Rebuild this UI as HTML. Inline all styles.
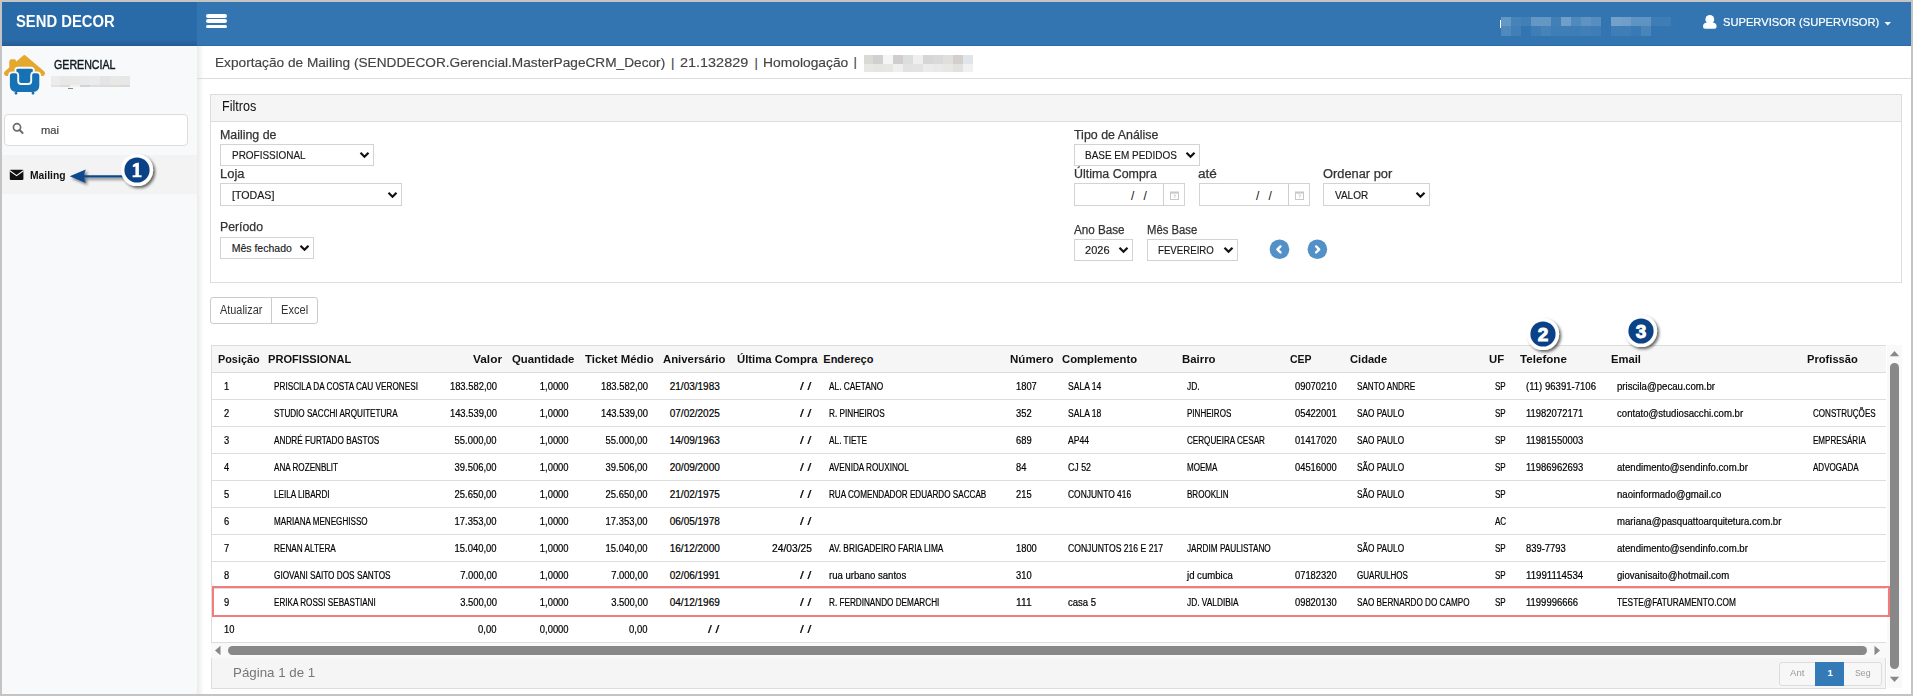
<!DOCTYPE html>
<html><head><meta charset="utf-8">
<style>
html,body{margin:0;padding:0;}
body{width:1913px;height:696px;position:relative;overflow:hidden;background:#c4c4c4;font-family:"Liberation Sans",sans-serif;}
.a{position:absolute;}
.t{position:absolute;white-space:nowrap;line-height:1;font-family:"Liberation Sans",sans-serif;}
.sel{position:absolute;background:#fff;border:1px solid #d3d3d3;box-sizing:border-box;}
.chev{position:absolute;width:11px;height:8px;}
.blk{position:absolute;}
</style></head><body>
<!-- page -->
<div class="a" style="left:2px;top:2px;width:1909px;height:692px;background:#fff;"></div>
<!-- header brand -->
<div class="a" style="left:2px;top:2px;width:195px;height:44px;background:linear-gradient(to bottom,#296aa8 0px,#296aa8 38px,#265f98 43px,#1e5590 44px);"></div>
<div class="a" style="left:197px;top:2px;width:1714px;height:44px;background:#3275b1;border-bottom:1px solid #2a6cab;box-sizing:border-box;"></div>
<!-- hamburger -->
<div class="a" style="left:206px;top:14px;width:21px;height:3.5px;border-radius:2px;background:#fff;"></div>
<div class="a" style="left:206px;top:19.3px;width:21px;height:3.5px;border-radius:2px;background:#fff;"></div>
<div class="a" style="left:206px;top:24.6px;width:21px;height:3.5px;border-radius:2px;background:#fff;"></div>
<!-- blurred header blocks -->
<div class="blk" style="left:1501px;top:17px;width:10px;height:9px;background:rgba(255,255,255,0.25);"></div>
<div class="blk" style="left:1501px;top:26px;width:10px;height:10px;background:rgba(255,255,255,0.15);"></div>
<div class="blk" style="left:1511px;top:17px;width:10px;height:9px;background:rgba(255,255,255,0.1);"></div>
<div class="blk" style="left:1511px;top:26px;width:10px;height:10px;background:rgba(255,255,255,0.08);"></div>
<div class="blk" style="left:1521px;top:17px;width:10px;height:9px;background:rgba(255,255,255,0.08);"></div>
<div class="blk" style="left:1531px;top:17px;width:10px;height:9px;background:rgba(255,255,255,0.25);"></div>
<div class="blk" style="left:1531px;top:26px;width:10px;height:10px;background:rgba(255,255,255,0.06);"></div>
<div class="blk" style="left:1541px;top:17px;width:10px;height:9px;background:rgba(255,255,255,0.25);"></div>
<div class="blk" style="left:1541px;top:26px;width:10px;height:10px;background:rgba(255,255,255,0.1);"></div>
<div class="blk" style="left:1551px;top:17px;width:10px;height:9px;background:rgba(255,255,255,0.08);"></div>
<div class="blk" style="left:1551px;top:26px;width:10px;height:10px;background:rgba(255,255,255,0.06);"></div>
<div class="blk" style="left:1561px;top:17px;width:10px;height:9px;background:rgba(255,255,255,0.3);"></div>
<div class="blk" style="left:1561px;top:26px;width:10px;height:10px;background:rgba(255,255,255,0.06);"></div>
<div class="blk" style="left:1571px;top:17px;width:10px;height:9px;background:rgba(255,255,255,0.15);"></div>
<div class="blk" style="left:1571px;top:26px;width:10px;height:10px;background:rgba(255,255,255,0.06);"></div>
<div class="blk" style="left:1581px;top:17px;width:10px;height:9px;background:rgba(255,255,255,0.22);"></div>
<div class="blk" style="left:1581px;top:26px;width:10px;height:10px;background:rgba(255,255,255,0.08);"></div>
<div class="blk" style="left:1591px;top:17px;width:10px;height:9px;background:rgba(255,255,255,0.18);"></div>
<div class="blk" style="left:1591px;top:26px;width:10px;height:10px;background:rgba(255,255,255,0.06);"></div>
<div class="blk" style="left:1611px;top:17px;width:10px;height:9px;background:rgba(255,255,255,0.32);"></div>
<div class="blk" style="left:1611px;top:26px;width:10px;height:10px;background:rgba(255,255,255,0.06);"></div>
<div class="blk" style="left:1621px;top:17px;width:10px;height:9px;background:rgba(255,255,255,0.3);"></div>
<div class="blk" style="left:1621px;top:26px;width:10px;height:10px;background:rgba(255,255,255,0.06);"></div>
<div class="blk" style="left:1631px;top:17px;width:10px;height:9px;background:rgba(255,255,255,0.22);"></div>
<div class="blk" style="left:1631px;top:26px;width:10px;height:10px;background:rgba(255,255,255,0.04);"></div>
<div class="blk" style="left:1641px;top:17px;width:10px;height:9px;background:rgba(255,255,255,0.22);"></div>
<div class="blk" style="left:1641px;top:26px;width:10px;height:10px;background:rgba(255,255,255,0.12);"></div>
<div class="blk" style="left:1651px;top:17px;width:10px;height:9px;background:rgba(255,255,255,0.06);"></div>
<div class="blk" style="left:1661px;top:17px;width:10px;height:9px;background:rgba(255,255,255,0.06);"></div>
<div class="a" style="left:1500px;top:20px;width:1px;height:8px;background:#fff;"></div>
<!-- user icon -->
<svg class="a" style="left:1700px;top:12px" width="20" height="20" viewBox="1700 12 20 20">
<circle cx="1709.8" cy="19.4" r="4.4" fill="#fff"/>
<path d="M1703 26.8 Q1703 23.2 1706.6 22.6 L1713 22.6 Q1716.6 23.2 1716.6 26.8 Q1716.6 28.7 1714.4 28.7 L1705.2 28.7 Q1703 28.7 1703 26.8Z" fill="#fff"/>
</svg>
<svg class="a" style="left:1884px;top:21px" width="8" height="5" viewBox="0 0 8 5"><path d="M0.5 1 L7 1 L3.75 4.4Z" fill="#fff"/></svg>

<!-- sidebar -->
<div class="a" style="left:2px;top:46px;width:195px;height:648px;background:#f8f9fb;"></div>
<!-- logo -->
<svg class="a" style="left:0px;top:50px" width="50" height="50" viewBox="0 0 50 50">
<path d="M24.4 6.2 L43 21.8 Q45 24 42.6 24.8 L6.4 24.8 Q4 24 6 21.8 Z" fill="#e5a82d" stroke="#e5a82d" stroke-width="2.4" stroke-linejoin="round"/>
<rect x="9.3" y="9.3" width="6.9" height="10" rx="2.2" fill="#e5a82d"/>
<path d="M12.4 22.4 L36.8 22.4 Q40.2 22.4 40.2 25.8 L40.2 35.6 Q40.2 43 33 43 L16.4 43 Q9 43 9 35.6 L9 25.8 Q9 22.4 12.4 22.4Z" fill="#1672b5" stroke="#f8f9fb" stroke-width="1.8"/>
<path d="M17.8 17.8 L31 17.8 Q34.2 17.8 33.8 20.8 L33.4 22.2 Q31.2 23.2 31.2 25 L31.2 31 Q31.2 34 28.2 34 L21.2 34 Q18.2 34 18.2 31 L18.2 25 Q18.2 23.2 15.8 22.2 L15.4 20.8 Q15 17.8 17.8 17.8Z" fill="#1672b5" stroke="#f8f9fb" stroke-width="1.9"/>
<rect x="14.6" y="42" width="2.8" height="2.4" rx="0.8" fill="#1672b5"/>
<rect x="31.6" y="42" width="2.8" height="2.4" rx="0.8" fill="#1672b5"/>
</svg>
<!-- blurred user name -->
<div class="blk" style="left:51px;top:76px;width:9px;height:9px;background:#ececec;"></div>
<div class="blk" style="left:51px;top:85px;width:9px;height:2px;background:#e2e2e0;"></div>
<div class="blk" style="left:60px;top:76px;width:10px;height:9px;background:#e8e8e9;"></div>
<div class="blk" style="left:60px;top:85px;width:10px;height:2px;background:#dcdcdc;"></div>
<div class="blk" style="left:70px;top:76px;width:10px;height:9px;background:#e9e9e8;"></div>
<div class="blk" style="left:70px;top:85px;width:10px;height:2px;background:#f0f0ee;"></div>
<div class="blk" style="left:80px;top:76px;width:10px;height:9px;background:#e8eaee;"></div>
<div class="blk" style="left:80px;top:85px;width:10px;height:2px;background:#d3d3d5;"></div>
<div class="blk" style="left:90px;top:76px;width:10px;height:9px;background:#ebebeb;"></div>
<div class="blk" style="left:90px;top:85px;width:10px;height:2px;background:#dedee0;"></div>
<div class="blk" style="left:100px;top:76px;width:10px;height:9px;background:#e4e4e6;"></div>
<div class="blk" style="left:100px;top:85px;width:10px;height:2px;background:#dcdcdc;"></div>
<div class="blk" style="left:110px;top:76px;width:10px;height:9px;background:#e8e8e7;"></div>
<div class="blk" style="left:110px;top:85px;width:10px;height:2px;background:#dddbd6;"></div>
<div class="blk" style="left:120px;top:76px;width:10px;height:9px;background:#e7e7e8;"></div>
<div class="blk" style="left:120px;top:85px;width:10px;height:2px;background:#d9d9db;"></div>
<div class="blk" style="left:68px;top:88px;width:5px;height:1px;background:#888;"></div>
<!-- search -->
<div class="a" style="left:4px;top:114px;width:184px;height:32px;background:#fff;border:1px solid #dcdcdc;border-radius:4px;box-sizing:border-box;"></div>
<svg class="a" style="left:11px;top:121px" width="14" height="14" viewBox="0 0 14 14">
<circle cx="6" cy="6.3" r="3.6" fill="none" stroke="#6b6b6b" stroke-width="1.7"/>
<path d="M8.6 9 L11.6 12" stroke="#6b6b6b" stroke-width="1.9" stroke-linecap="round"/>
</svg>
<!-- mailing row -->
<div class="a" style="left:2px;top:155px;width:195px;height:39px;background:#f3f3f3;"></div>
<svg class="a" style="left:9px;top:169px" width="15" height="12" viewBox="0 0 15 12">
<rect x="0.8" y="0.7" width="13.6" height="10.4" rx="1" fill="#111"/>
<path d="M0.8 1.8 L7.6 6.6 L14.4 1.8" fill="none" stroke="#fff" stroke-width="1.1"/>
</svg>
<!-- arrow 1 -->
<svg class="a" style="left:60px;top:160px" width="70" height="30" viewBox="0 0 70 30" overflow="visible">
<defs><filter id="sh" x="-30%" y="-50%" width="160%" height="200%"><feGaussianBlur in="SourceAlpha" stdDeviation="1.6"/><feOffset dx="1.5" dy="2" result="o"/><feComponentTransfer><feFuncA type="linear" slope="0.55"/></feComponentTransfer><feMerge><feMergeNode/><feMergeNode in="SourceGraphic"/></feMerge></filter></defs>
<g filter="url(#sh)">
<path d="M24 16.3 L64 16.3" stroke="#0d4a8c" stroke-width="2.3"/>
<path d="M9.7 16.3 L25.8 9.6 Q22.6 16.3 25.8 23.1 Z" fill="#0d4a8c"/>
</g>
</svg>
<svg class="a" style="left:115.1px;top:148px" width="46" height="46" viewBox="0 0 46 46"><defs><filter id="bs1" x="-40%" y="-40%" width="180%" height="180%"><feGaussianBlur in="SourceAlpha" stdDeviation="1.5"/><feOffset dx="1.6" dy="1.8"/><feComponentTransfer><feFuncA type="linear" slope="0.6"/></feComponentTransfer><feMerge><feMergeNode/><feMergeNode in="SourceGraphic"/></feMerge></filter></defs><g filter="url(#bs1)"><circle cx="22" cy="22" r="16.1" fill="#fff"/></g><circle cx="22" cy="22" r="12.6" fill="#0b4287"/><path d="M20.4 15.2 L23.9 14.6 L23.9 27.2 L26.6 27.2 L26.6 29.2 L17.6 29.2 L17.6 27.2 L20.4 27.2 L20.4 18.4 L17.8 19.2 L17.8 17 Z" fill="#fff"/></svg>

<!-- content -->
<div class="a" style="left:197px;top:46px;width:7px;height:648px;background:linear-gradient(to right,rgba(0,0,0,0.08),rgba(0,0,0,0));"></div>
<div class="a" style="left:197px;top:78px;width:1714px;height:1px;background:#dcdcdc;"></div>
<div class="blk" style="left:864px;top:55px;width:9px;height:9px;background:#d9d9d6;"></div>
<div class="blk" style="left:864px;top:64px;width:9px;height:8px;background:#e8e7e5;"></div>
<div class="blk" style="left:873px;top:55px;width:10px;height:9px;background:#d0d0d0;"></div>
<div class="blk" style="left:873px;top:64px;width:10px;height:8px;background:#e5e5e4;"></div>
<div class="blk" style="left:883px;top:55px;width:10px;height:9px;background:#f4f5f7;"></div>
<div class="blk" style="left:883px;top:64px;width:10px;height:8px;background:#e6e7e5;"></div>
<div class="blk" style="left:893px;top:55px;width:10px;height:9px;background:#d0cdce;"></div>
<div class="blk" style="left:893px;top:64px;width:10px;height:8px;background:#efefed;"></div>
<div class="blk" style="left:903px;top:55px;width:10px;height:9px;background:#dcdedd;"></div>
<div class="blk" style="left:903px;top:64px;width:10px;height:8px;background:#e1e3e2;"></div>
<div class="blk" style="left:913px;top:55px;width:10px;height:9px;background:#efefef;"></div>
<div class="blk" style="left:913px;top:64px;width:10px;height:8px;background:#e3e3e3;"></div>
<div class="blk" style="left:923px;top:55px;width:10px;height:9px;background:#d6d6d6;"></div>
<div class="blk" style="left:923px;top:64px;width:10px;height:8px;background:#ebebeb;"></div>
<div class="blk" style="left:933px;top:55px;width:10px;height:9px;background:#d9d9d9;"></div>
<div class="blk" style="left:933px;top:64px;width:10px;height:8px;background:#e9e9e9;"></div>
<div class="blk" style="left:943px;top:55px;width:10px;height:9px;background:#dfdfdd;"></div>
<div class="blk" style="left:943px;top:64px;width:10px;height:8px;background:#e7e7e5;"></div>
<div class="blk" style="left:953px;top:55px;width:10px;height:9px;background:#d3cfcd;"></div>
<div class="blk" style="left:953px;top:64px;width:10px;height:8px;background:#e3e1df;"></div>
<div class="blk" style="left:963px;top:55px;width:10px;height:9px;background:#e1e4e8;"></div>
<div class="blk" style="left:963px;top:64px;width:10px;height:8px;background:#eef0f2;"></div>
<!-- Filtros panel -->
<div class="a" style="left:210px;top:94px;width:1692px;height:189px;border:1px solid #dddddd;box-sizing:border-box;background:#fff;"></div>
<div class="a" style="left:211px;top:95px;width:1690px;height:26px;background:#f5f5f5;border-bottom:1px solid #dddddd;"></div>
<div class="sel" style="left:220px;top:144px;width:154px;height:22px;"></div><svg class="chev" style="left:359.0px;top:151.4px" viewBox="0 0 11 8"><path d="M1.5 1.8 L5.5 5.8 L9.5 1.8" fill="none" stroke="#111" stroke-width="2.2"/></svg>
<div class="sel" style="left:220px;top:183px;width:182px;height:23px;"></div><svg class="chev" style="left:387.0px;top:190.9px" viewBox="0 0 11 8"><path d="M1.5 1.8 L5.5 5.8 L9.5 1.8" fill="none" stroke="#111" stroke-width="2.2"/></svg>
<div class="sel" style="left:220px;top:237px;width:94px;height:22px;"></div><svg class="chev" style="left:299.0px;top:244.4px" viewBox="0 0 11 8"><path d="M1.5 1.8 L5.5 5.8 L9.5 1.8" fill="none" stroke="#111" stroke-width="2.2"/></svg>
<div class="sel" style="left:1074px;top:144px;width:126px;height:22px;"></div><svg class="chev" style="left:1185.0px;top:151.4px" viewBox="0 0 11 8"><path d="M1.5 1.8 L5.5 5.8 L9.5 1.8" fill="none" stroke="#111" stroke-width="2.2"/></svg>
<div class="sel" style="left:1323px;top:183px;width:107px;height:23px;"></div><svg class="chev" style="left:1415.0px;top:190.9px" viewBox="0 0 11 8"><path d="M1.5 1.8 L5.5 5.8 L9.5 1.8" fill="none" stroke="#111" stroke-width="2.2"/></svg>
<div class="sel" style="left:1074px;top:239px;width:59px;height:22px;"></div><svg class="chev" style="left:1118.0px;top:246.4px" viewBox="0 0 11 8"><path d="M1.5 1.8 L5.5 5.8 L9.5 1.8" fill="none" stroke="#111" stroke-width="2.2"/></svg>
<div class="sel" style="left:1147px;top:239px;width:91px;height:22px;"></div><svg class="chev" style="left:1223.0px;top:246.4px" viewBox="0 0 11 8"><path d="M1.5 1.8 L5.5 5.8 L9.5 1.8" fill="none" stroke="#111" stroke-width="2.2"/></svg>
<!-- date inputs -->
<div class="sel" style="left:1074px;top:183px;width:111px;height:23px;"></div>
<div class="a" style="left:1163px;top:183px;width:1px;height:23px;background:#cfcfcf;"></div>
<div class="sel" style="left:1199px;top:183px;width:111px;height:23px;"></div>
<div class="a" style="left:1288px;top:183px;width:1px;height:23px;background:#cfcfcf;"></div>
<span class="t" style="left:1131px;top:190px;font-size:12px;color:#111;">/</span>
<span class="t" style="left:1143.5px;top:190px;font-size:12px;color:#111;">/</span>
<span class="t" style="left:1256px;top:190px;font-size:12px;color:#111;">/</span>
<span class="t" style="left:1268.5px;top:190px;font-size:12px;color:#111;">/</span>
<svg class="a" style="left:1169px;top:190px" width="11" height="11" viewBox="0 0 11 11"><rect x="1.5" y="2" width="8" height="7.5" fill="none" stroke="#c8c8c8" stroke-width="1"/><rect x="1.5" y="2" width="8" height="1.6" fill="#c8c8c8"/><path d="M4.3 5 L6.6 5 L5.3 8" fill="none" stroke="#d0d0d0" stroke-width="0.9"/></svg>
<svg class="a" style="left:1294px;top:190px" width="11" height="11" viewBox="0 0 11 11"><rect x="1.5" y="2" width="8" height="7.5" fill="none" stroke="#c8c8c8" stroke-width="1"/><rect x="1.5" y="2" width="8" height="1.6" fill="#c8c8c8"/><path d="M4.3 5 L6.6 5 L5.3 8" fill="none" stroke="#d0d0d0" stroke-width="0.9"/></svg>
<!-- prev/next -->
<svg class="a" style="left:1269px;top:239px" width="21" height="21" viewBox="0 0 21 21"><circle cx="10.5" cy="10.3" r="9.8" fill="#5290c8"/><path d="M11.5 7.4 L8.4 10.4 L11.5 13.4" fill="none" stroke="#fff" stroke-width="2.4" stroke-linecap="round" stroke-linejoin="round"/></svg>
<svg class="a" style="left:1307px;top:239px" width="21" height="21" viewBox="0 0 21 21"><circle cx="10.4" cy="10.3" r="9.8" fill="#5290c8"/><path d="M9.1 7.4 L12.2 10.4 L9.1 13.4" fill="none" stroke="#fff" stroke-width="2.4" stroke-linecap="round" stroke-linejoin="round"/></svg>
<!-- buttons -->
<div class="a" style="left:210px;top:297px;width:108px;height:27px;border:1px solid #cccccc;border-radius:3px;box-sizing:border-box;background:#fff;"></div>
<div class="a" style="left:271px;top:297px;width:1px;height:27px;background:#cccccc;"></div>

<!-- table -->
<div class="a" style="left:211px;top:345px;width:1675px;height:298px;border:1px solid #dddddd;border-right:none;box-sizing:border-box;background:#fff;"></div>
<div class="a" style="left:212px;top:346px;width:1674px;height:26px;background:#f6f6f6;"></div>
<div class="a" style="left:212px;top:372px;width:1674px;height:1px;background:#dddddd;"></div>
<div class="a" style="left:212px;top:399px;width:1674px;height:1px;background:#dddddd;"></div>
<div class="a" style="left:212px;top:426px;width:1674px;height:1px;background:#dddddd;"></div>
<div class="a" style="left:212px;top:453px;width:1674px;height:1px;background:#dddddd;"></div>
<div class="a" style="left:212px;top:480px;width:1674px;height:1px;background:#dddddd;"></div>
<div class="a" style="left:212px;top:507px;width:1674px;height:1px;background:#dddddd;"></div>
<div class="a" style="left:212px;top:534px;width:1674px;height:1px;background:#dddddd;"></div>
<div class="a" style="left:212px;top:561px;width:1674px;height:1px;background:#dddddd;"></div>
<div class="a" style="left:212px;top:588px;width:1674px;height:1px;background:#dddddd;"></div>
<div class="a" style="left:212px;top:615px;width:1674px;height:1px;background:#dddddd;"></div>
<!-- vertical scrollbar -->
<div class="a" style="left:1887px;top:345px;width:15px;height:343px;background:#f9f9f9;"></div>
<div class="a" style="left:212px;top:586px;width:1678px;height:31px;border:2px solid #f27b7b;box-sizing:border-box;"></div>
<svg class="a" style="left:1889px;top:350px" width="11" height="7" viewBox="0 0 11 7"><path d="M0.8 6.2 L5.5 1 L10.2 6.2Z" fill="#888"/></svg>
<div class="a" style="left:1890px;top:363px;width:9px;height:306px;border-radius:4.5px;background:#888;"></div>
<svg class="a" style="left:1889px;top:676px" width="11" height="7" viewBox="0 0 11 7"><path d="M0.8 0.8 L5.5 6 L10.2 0.8Z" fill="#888"/></svg>
<!-- horizontal scrollbar -->
<div class="a" style="left:211px;top:643px;width:1676px;height:15px;background:#f9f9f9;"></div>
<svg class="a" style="left:213px;top:645px" width="9" height="11" viewBox="0 0 9 11"><path d="M7.5 0.8 L2 5.5 L7.5 10.2Z" fill="#888"/></svg>
<div class="a" style="left:228px;top:646px;width:1639px;height:9px;border-radius:4.5px;background:#888;"></div>
<svg class="a" style="left:1873px;top:645px" width="9" height="11" viewBox="0 0 9 11"><path d="M1.5 0.8 L7 5.5 L1.5 10.2Z" fill="#888"/></svg>
<!-- footer -->
<div class="a" style="left:211px;top:658px;width:1675px;height:31px;border:1px solid #dddddd;border-top:none;box-sizing:border-box;background:#f5f5f5;"></div>
<div class="a" style="left:1779px;top:662px;width:103px;height:24px;border:1px solid #dddddd;border-radius:3px;box-sizing:border-box;background:#f7f7f7;"></div>
<div class="a" style="left:1815px;top:662px;width:29px;height:24px;background:#337ab7;"></div>
<span class="t" style="left:15.90px;top:13.86px;font-size:16px;font-weight:bold;color:#fff;transform:scaleX(0.9252);transform-origin:left 50%;">SEND DECOR</span>
<span class="t" style="left:1722.60px;top:17.09px;font-size:11px;font-weight:normal;color:#fff;transform:scaleX(1.0133);transform-origin:left 50%;-webkit-text-stroke:0.2px #fff;">SUPERVISOR (SUPERVISOR)</span>
<span class="t" style="left:53.50px;top:59.04px;font-size:12px;font-weight:normal;color:#101820;transform:scaleX(0.8868);transform-origin:left 50%;-webkit-text-stroke:0.4px #101820;">GERENCIAL</span>
<span class="t" style="left:41.00px;top:124.87px;font-size:11.5px;font-weight:normal;color:#444;transform:scaleX(0.9714);transform-origin:left 50%;-webkit-text-stroke:0.2px #444;">mai</span>
<span class="t" style="left:30.00px;top:169.69px;font-size:11px;font-weight:bold;color:#111;transform:scaleX(0.9370);transform-origin:left 50%;">Mailing</span>
<span class="t" style="left:214.70px;top:55.50px;font-size:13px;font-weight:normal;color:#444;transform:scaleX(1.0508);transform-origin:left 50%;-webkit-text-stroke:0.15px #444;">Exportação de Mailing (SENDDECOR.Gerencial.MasterPageCRM_Decor)</span>
<span class="t" style="left:671.00px;top:55.50px;font-size:13px;font-weight:normal;color:#444;-webkit-text-stroke:0.15px #444;">|</span>
<span class="t" style="left:679.90px;top:55.50px;font-size:13px;font-weight:normal;color:#444;transform:scaleX(1.1098);transform-origin:left 50%;-webkit-text-stroke:0.15px #444;">21.132829</span>
<span class="t" style="left:754.40px;top:55.50px;font-size:13px;font-weight:normal;color:#444;-webkit-text-stroke:0.15px #444;">|</span>
<span class="t" style="left:763.30px;top:55.50px;font-size:13px;font-weight:normal;color:#444;transform:scaleX(1.0634);transform-origin:left 50%;-webkit-text-stroke:0.15px #444;">Homologação</span>
<span class="t" style="left:853.40px;top:54.70px;font-size:13px;font-weight:normal;color:#444;-webkit-text-stroke:0.15px #444;">|</span>
<span class="t" style="left:222.00px;top:98.95px;font-size:14px;font-weight:normal;color:#111;transform:scaleX(0.9000);transform-origin:left 50%;">Filtros</span>
<span class="t" style="left:220.00px;top:129.32px;font-size:12.5px;font-weight:normal;color:#333333;transform:scaleX(0.9899);transform-origin:left 50%;-webkit-text-stroke:0.25px #333;">Mailing de</span>
<span class="t" style="left:220.00px;top:168.12px;font-size:12.5px;font-weight:normal;color:#333333;transform:scaleX(1.0367);transform-origin:left 50%;-webkit-text-stroke:0.25px #333;">Loja</span>
<span class="t" style="left:220.00px;top:220.92px;font-size:12.5px;font-weight:normal;color:#333333;transform:scaleX(0.9822);transform-origin:left 50%;-webkit-text-stroke:0.25px #333;">Período</span>
<span class="t" style="left:1073.70px;top:129.32px;font-size:12.5px;font-weight:normal;color:#333333;transform:scaleX(0.9930);transform-origin:left 50%;-webkit-text-stroke:0.25px #333;">Tipo de Análise</span>
<span class="t" style="left:1073.70px;top:168.12px;font-size:12.5px;font-weight:normal;color:#333333;transform:scaleX(0.9946);transform-origin:left 50%;-webkit-text-stroke:0.25px #333;">Última Compra</span>
<span class="t" style="left:1198.10px;top:168.12px;font-size:12.5px;font-weight:normal;color:#333333;transform:scaleX(1.0877);transform-origin:left 50%;-webkit-text-stroke:0.25px #333;">até</span>
<span class="t" style="left:1322.90px;top:168.12px;font-size:12.5px;font-weight:normal;color:#333333;transform:scaleX(1.0283);transform-origin:left 50%;-webkit-text-stroke:0.25px #333;">Ordenar por</span>
<span class="t" style="left:1073.70px;top:224.12px;font-size:12.5px;font-weight:normal;color:#333333;transform:scaleX(0.9335);transform-origin:left 50%;-webkit-text-stroke:0.25px #333;">Ano Base</span>
<span class="t" style="left:1146.50px;top:224.12px;font-size:12.5px;font-weight:normal;color:#333333;transform:scaleX(0.9032);transform-origin:left 50%;-webkit-text-stroke:0.25px #333;">Mês Base</span>
<span class="t" style="left:231.70px;top:150.41px;font-size:10.5px;font-weight:normal;color:#1a1a1a;transform:scaleX(0.9484);transform-origin:left 50%;-webkit-text-stroke:0.15px #111;">PROFISSIONAL</span>
<span class="t" style="left:231.70px;top:190.31px;font-size:10.5px;font-weight:normal;color:#1a1a1a;transform:scaleX(1.0140);transform-origin:left 50%;-webkit-text-stroke:0.15px #111;">[TODAS]</span>
<span class="t" style="left:231.70px;top:242.91px;font-size:10.5px;font-weight:normal;color:#1a1a1a;-webkit-text-stroke:0.15px #111;">Mês fechado</span>
<span class="t" style="left:1085.40px;top:150.41px;font-size:10.5px;font-weight:normal;color:#1a1a1a;transform:scaleX(0.9478);transform-origin:left 50%;-webkit-text-stroke:0.15px #111;">BASE EM PEDIDOS</span>
<span class="t" style="left:1334.80px;top:190.31px;font-size:10.5px;font-weight:normal;color:#1a1a1a;transform:scaleX(0.9507);transform-origin:left 50%;-webkit-text-stroke:0.15px #111;">VALOR</span>
<span class="t" style="left:1085.40px;top:245.01px;font-size:10.5px;font-weight:normal;color:#1a1a1a;transform:scaleX(1.0489);transform-origin:left 50%;-webkit-text-stroke:0.15px #111;">2026</span>
<span class="t" style="left:1158.00px;top:245.01px;font-size:10.5px;font-weight:normal;color:#1a1a1a;transform:scaleX(0.9196);transform-origin:left 50%;-webkit-text-stroke:0.15px #111;">FEVEREIRO</span>
<span class="t" style="left:220.20px;top:303.94px;font-size:12px;font-weight:normal;color:#333;transform:scaleX(0.9082);transform-origin:left 50%;">Atualizar</span>
<span class="t" style="left:281.20px;top:303.94px;font-size:12px;font-weight:normal;color:#333;transform:scaleX(0.9235);transform-origin:left 50%;">Excel</span>
<span class="t" style="left:233.30px;top:665.90px;font-size:13px;font-weight:normal;color:#777;transform:scaleX(1.0245);transform-origin:left 50%;">Página 1 de 1</span>
<span class="t" style="left:1790.20px;top:667.66px;font-size:9.5px;font-weight:normal;color:#999;transform:scaleX(1.0099);transform-origin:left 50%;">Ant</span>
<span class="t" style="left:1827.40px;top:667.66px;font-size:9.5px;font-weight:bold;color:#fff;">1</span>
<span class="t" style="left:1855.00px;top:667.66px;font-size:9.5px;font-weight:normal;color:#999;transform:scaleX(0.9229);transform-origin:left 50%;">Seg</span>
<span class="t" style="left:217.50px;top:354.09px;font-size:11px;font-weight:bold;color:#111;transform:scaleX(0.9861);transform-origin:left 50%;">Posição</span>
<span class="t" style="left:268.00px;top:354.09px;font-size:11px;font-weight:bold;color:#111;transform:scaleX(1.0084);transform-origin:left 50%;">PROFISSIONAL</span>
<span class="t" style="left:472.90px;top:354.09px;font-size:11px;font-weight:bold;color:#111;transform:scaleX(1.0779);transform-origin:left 50%;">Valor</span>
<span class="t" style="left:511.80px;top:354.09px;font-size:11px;font-weight:bold;color:#111;transform:scaleX(1.0313);transform-origin:left 50%;">Quantidade</span>
<span class="t" style="left:584.70px;top:354.09px;font-size:11px;font-weight:bold;color:#111;transform:scaleX(1.0328);transform-origin:left 50%;">Ticket Médio</span>
<span class="t" style="left:663.20px;top:354.09px;font-size:11px;font-weight:bold;color:#111;transform:scaleX(1.0309);transform-origin:left 50%;">Aniversário</span>
<span class="t" style="left:736.50px;top:354.09px;font-size:11px;font-weight:bold;color:#111;transform:scaleX(1.0289);transform-origin:left 50%;">Última Compra</span>
<span class="t" style="left:823.30px;top:354.09px;font-size:11px;font-weight:bold;color:#111;">Endereço</span>
<span class="t" style="left:1010.00px;top:354.09px;font-size:11px;font-weight:bold;color:#111;transform:scaleX(1.0490);transform-origin:left 50%;">Número</span>
<span class="t" style="left:1061.80px;top:354.09px;font-size:11px;font-weight:bold;color:#111;transform:scaleX(1.0240);transform-origin:left 50%;">Complemento</span>
<span class="t" style="left:1181.50px;top:354.09px;font-size:11px;font-weight:bold;color:#111;transform:scaleX(1.0340);transform-origin:left 50%;">Bairro</span>
<span class="t" style="left:1289.70px;top:354.09px;font-size:11px;font-weight:bold;color:#111;transform:scaleX(0.9550);transform-origin:left 50%;">CEP</span>
<span class="t" style="left:1350.30px;top:354.09px;font-size:11px;font-weight:bold;color:#111;transform:scaleX(1.0116);transform-origin:left 50%;">Cidade</span>
<span class="t" style="left:1489.20px;top:354.09px;font-size:11px;font-weight:bold;color:#111;transform:scaleX(1.0298);transform-origin:left 50%;">UF</span>
<span class="t" style="left:1519.60px;top:354.09px;font-size:11px;font-weight:bold;color:#111;transform:scaleX(1.0560);transform-origin:left 50%;">Telefone</span>
<span class="t" style="left:1611.10px;top:354.09px;font-size:11px;font-weight:bold;color:#111;transform:scaleX(1.0188);transform-origin:left 50%;">Email</span>
<span class="t" style="left:1806.80px;top:354.09px;font-size:11px;font-weight:bold;color:#111;transform:scaleX(1.0134);transform-origin:left 50%;">Profissão</span>
<span class="t" style="left:223.70px;top:382.04px;font-size:10px;font-weight:normal;color:#000;transform:scaleX(0.9350);transform-origin:left 50%;-webkit-text-stroke:0.2px #000;">1</span>
<span class="t" style="left:273.70px;top:382.04px;font-size:10px;font-weight:normal;color:#000;transform:scaleX(0.8206);transform-origin:left 50%;-webkit-text-stroke:0.2px #000;">PRISCILA DA COSTA CAU VERONESI</span>
<span class="t" style="right:1416.40px;top:382.04px;font-size:10px;font-weight:normal;color:#000;transform:scaleX(0.9422);transform-origin:right 50%;-webkit-text-stroke:0.2px #000;">183.582,00</span>
<span class="t" style="right:1344.10px;top:382.04px;font-size:10px;font-weight:normal;color:#000;transform:scaleX(0.9409);transform-origin:right 50%;-webkit-text-stroke:0.2px #000;">1,0000</span>
<span class="t" style="right:1265.10px;top:382.04px;font-size:10px;font-weight:normal;color:#000;transform:scaleX(0.9422);transform-origin:right 50%;-webkit-text-stroke:0.2px #000;">183.582,00</span>
<span class="t" style="right:1193.20px;top:382.04px;font-size:10px;font-weight:normal;color:#000;-webkit-text-stroke:0.2px #000;">21/03/1983</span>
<span class="t" style="right:1101.50px;top:382.04px;font-size:10px;font-weight:normal;color:#000;transform:scaleX(1.3667);transform-origin:right 50%;-webkit-text-stroke:0.2px #000;">/ /</span>
<span class="t" style="left:828.80px;top:382.04px;font-size:10px;font-weight:normal;color:#000;transform:scaleX(0.8307);transform-origin:left 50%;-webkit-text-stroke:0.2px #000;">AL. CAETANO</span>
<span class="t" style="left:1015.70px;top:382.04px;font-size:10px;font-weight:normal;color:#000;transform:scaleX(0.9350);transform-origin:left 50%;-webkit-text-stroke:0.2px #000;">1807</span>
<span class="t" style="left:1067.90px;top:382.04px;font-size:10px;font-weight:normal;color:#000;transform:scaleX(0.8554);transform-origin:left 50%;-webkit-text-stroke:0.2px #000;">SALA 14</span>
<span class="t" style="left:1186.80px;top:382.04px;font-size:10px;font-weight:normal;color:#000;transform:scaleX(0.8411);transform-origin:left 50%;-webkit-text-stroke:0.2px #000;">JD.</span>
<span class="t" style="left:1295.00px;top:382.04px;font-size:10px;font-weight:normal;color:#000;transform:scaleX(0.9350);transform-origin:left 50%;-webkit-text-stroke:0.2px #000;">09070210</span>
<span class="t" style="left:1356.50px;top:382.04px;font-size:10px;font-weight:normal;color:#000;transform:scaleX(0.8145);transform-origin:left 50%;-webkit-text-stroke:0.2px #000;">SANTO ANDRE</span>
<span class="t" style="left:1495.20px;top:382.04px;font-size:10px;font-weight:normal;color:#000;transform:scaleX(0.8050);transform-origin:left 50%;-webkit-text-stroke:0.2px #000;">SP</span>
<span class="t" style="left:1525.60px;top:382.04px;font-size:10px;font-weight:normal;color:#000;transform:scaleX(0.9558);transform-origin:left 50%;-webkit-text-stroke:0.2px #000;">(11) 96391-7106</span>
<span class="t" style="left:1616.50px;top:382.04px;font-size:10px;font-weight:normal;color:#000;transform:scaleX(0.9619);transform-origin:left 50%;-webkit-text-stroke:0.2px #000;">priscila@pecau.com.br</span>
<span class="t" style="left:223.70px;top:409.04px;font-size:10px;font-weight:normal;color:#000;transform:scaleX(0.9350);transform-origin:left 50%;-webkit-text-stroke:0.2px #000;">2</span>
<span class="t" style="left:273.70px;top:409.04px;font-size:10px;font-weight:normal;color:#000;transform:scaleX(0.8121);transform-origin:left 50%;-webkit-text-stroke:0.2px #000;">STUDIO SACCHI ARQUITETURA</span>
<span class="t" style="right:1416.40px;top:409.04px;font-size:10px;font-weight:normal;color:#000;transform:scaleX(0.9422);transform-origin:right 50%;-webkit-text-stroke:0.2px #000;">143.539,00</span>
<span class="t" style="right:1344.10px;top:409.04px;font-size:10px;font-weight:normal;color:#000;transform:scaleX(0.9409);transform-origin:right 50%;-webkit-text-stroke:0.2px #000;">1,0000</span>
<span class="t" style="right:1265.10px;top:409.04px;font-size:10px;font-weight:normal;color:#000;transform:scaleX(0.9422);transform-origin:right 50%;-webkit-text-stroke:0.2px #000;">143.539,00</span>
<span class="t" style="right:1193.20px;top:409.04px;font-size:10px;font-weight:normal;color:#000;-webkit-text-stroke:0.2px #000;">07/02/2025</span>
<span class="t" style="right:1101.50px;top:409.04px;font-size:10px;font-weight:normal;color:#000;transform:scaleX(1.3667);transform-origin:right 50%;-webkit-text-stroke:0.2px #000;">/ /</span>
<span class="t" style="left:828.80px;top:409.04px;font-size:10px;font-weight:normal;color:#000;transform:scaleX(0.8210);transform-origin:left 50%;-webkit-text-stroke:0.2px #000;">R. PINHEIROS</span>
<span class="t" style="left:1015.70px;top:409.04px;font-size:10px;font-weight:normal;color:#000;transform:scaleX(0.9350);transform-origin:left 50%;-webkit-text-stroke:0.2px #000;">352</span>
<span class="t" style="left:1067.90px;top:409.04px;font-size:10px;font-weight:normal;color:#000;transform:scaleX(0.8554);transform-origin:left 50%;-webkit-text-stroke:0.2px #000;">SALA 18</span>
<span class="t" style="left:1186.80px;top:409.04px;font-size:10px;font-weight:normal;color:#000;transform:scaleX(0.8050);transform-origin:left 50%;-webkit-text-stroke:0.2px #000;">PINHEIROS</span>
<span class="t" style="left:1295.00px;top:409.04px;font-size:10px;font-weight:normal;color:#000;transform:scaleX(0.9350);transform-origin:left 50%;-webkit-text-stroke:0.2px #000;">05422001</span>
<span class="t" style="left:1356.50px;top:409.04px;font-size:10px;font-weight:normal;color:#000;transform:scaleX(0.8250);transform-origin:left 50%;-webkit-text-stroke:0.2px #000;">SAO PAULO</span>
<span class="t" style="left:1495.20px;top:409.04px;font-size:10px;font-weight:normal;color:#000;transform:scaleX(0.8050);transform-origin:left 50%;-webkit-text-stroke:0.2px #000;">SP</span>
<span class="t" style="left:1525.60px;top:409.04px;font-size:10px;font-weight:normal;color:#000;transform:scaleX(0.9465);transform-origin:left 50%;-webkit-text-stroke:0.2px #000;">11982072171</span>
<span class="t" style="left:1616.50px;top:409.04px;font-size:10px;font-weight:normal;color:#000;transform:scaleX(0.9604);transform-origin:left 50%;-webkit-text-stroke:0.2px #000;">contato@studiosacchi.com.br</span>
<span class="t" style="left:1812.60px;top:409.04px;font-size:10px;font-weight:normal;color:#000;transform:scaleX(0.8050);transform-origin:left 50%;-webkit-text-stroke:0.2px #000;">CONSTRUÇÕES</span>
<span class="t" style="left:223.70px;top:436.04px;font-size:10px;font-weight:normal;color:#000;transform:scaleX(0.9350);transform-origin:left 50%;-webkit-text-stroke:0.2px #000;">3</span>
<span class="t" style="left:273.70px;top:436.04px;font-size:10px;font-weight:normal;color:#000;transform:scaleX(0.8204);transform-origin:left 50%;-webkit-text-stroke:0.2px #000;">ANDRÉ FURTADO BASTOS</span>
<span class="t" style="right:1416.40px;top:436.04px;font-size:10px;font-weight:normal;color:#000;transform:scaleX(0.9431);transform-origin:right 50%;-webkit-text-stroke:0.2px #000;">55.000,00</span>
<span class="t" style="right:1344.10px;top:436.04px;font-size:10px;font-weight:normal;color:#000;transform:scaleX(0.9409);transform-origin:right 50%;-webkit-text-stroke:0.2px #000;">1,0000</span>
<span class="t" style="right:1265.10px;top:436.04px;font-size:10px;font-weight:normal;color:#000;transform:scaleX(0.9431);transform-origin:right 50%;-webkit-text-stroke:0.2px #000;">55.000,00</span>
<span class="t" style="right:1193.20px;top:436.04px;font-size:10px;font-weight:normal;color:#000;-webkit-text-stroke:0.2px #000;">14/09/1963</span>
<span class="t" style="right:1101.50px;top:436.04px;font-size:10px;font-weight:normal;color:#000;transform:scaleX(1.3667);transform-origin:right 50%;-webkit-text-stroke:0.2px #000;">/ /</span>
<span class="t" style="left:828.80px;top:436.04px;font-size:10px;font-weight:normal;color:#000;transform:scaleX(0.8285);transform-origin:left 50%;-webkit-text-stroke:0.2px #000;">AL. TIETE</span>
<span class="t" style="left:1015.70px;top:436.04px;font-size:10px;font-weight:normal;color:#000;transform:scaleX(0.9350);transform-origin:left 50%;-webkit-text-stroke:0.2px #000;">689</span>
<span class="t" style="left:1067.90px;top:436.04px;font-size:10px;font-weight:normal;color:#000;transform:scaleX(0.8641);transform-origin:left 50%;-webkit-text-stroke:0.2px #000;">AP44</span>
<span class="t" style="left:1186.80px;top:436.04px;font-size:10px;font-weight:normal;color:#000;transform:scaleX(0.8106);transform-origin:left 50%;-webkit-text-stroke:0.2px #000;">CERQUEIRA CESAR</span>
<span class="t" style="left:1295.00px;top:436.04px;font-size:10px;font-weight:normal;color:#000;transform:scaleX(0.9350);transform-origin:left 50%;-webkit-text-stroke:0.2px #000;">01417020</span>
<span class="t" style="left:1356.50px;top:436.04px;font-size:10px;font-weight:normal;color:#000;transform:scaleX(0.8250);transform-origin:left 50%;-webkit-text-stroke:0.2px #000;">SAO PAULO</span>
<span class="t" style="left:1495.20px;top:436.04px;font-size:10px;font-weight:normal;color:#000;transform:scaleX(0.8050);transform-origin:left 50%;-webkit-text-stroke:0.2px #000;">SP</span>
<span class="t" style="left:1525.60px;top:436.04px;font-size:10px;font-weight:normal;color:#000;transform:scaleX(0.9465);transform-origin:left 50%;-webkit-text-stroke:0.2px #000;">11981550003</span>
<span class="t" style="left:1812.60px;top:436.04px;font-size:10px;font-weight:normal;color:#000;transform:scaleX(0.8050);transform-origin:left 50%;-webkit-text-stroke:0.2px #000;">EMPRESÁRIA</span>
<span class="t" style="left:223.70px;top:463.04px;font-size:10px;font-weight:normal;color:#000;transform:scaleX(0.9350);transform-origin:left 50%;-webkit-text-stroke:0.2px #000;">4</span>
<span class="t" style="left:273.70px;top:463.04px;font-size:10px;font-weight:normal;color:#000;transform:scaleX(0.8118);transform-origin:left 50%;-webkit-text-stroke:0.2px #000;">ANA ROZENBLIT</span>
<span class="t" style="right:1416.40px;top:463.04px;font-size:10px;font-weight:normal;color:#000;transform:scaleX(0.9431);transform-origin:right 50%;-webkit-text-stroke:0.2px #000;">39.506,00</span>
<span class="t" style="right:1344.10px;top:463.04px;font-size:10px;font-weight:normal;color:#000;transform:scaleX(0.9409);transform-origin:right 50%;-webkit-text-stroke:0.2px #000;">1,0000</span>
<span class="t" style="right:1265.10px;top:463.04px;font-size:10px;font-weight:normal;color:#000;transform:scaleX(0.9431);transform-origin:right 50%;-webkit-text-stroke:0.2px #000;">39.506,00</span>
<span class="t" style="right:1193.20px;top:463.04px;font-size:10px;font-weight:normal;color:#000;-webkit-text-stroke:0.2px #000;">20/09/2000</span>
<span class="t" style="right:1101.50px;top:463.04px;font-size:10px;font-weight:normal;color:#000;transform:scaleX(1.3667);transform-origin:right 50%;-webkit-text-stroke:0.2px #000;">/ /</span>
<span class="t" style="left:828.80px;top:463.04px;font-size:10px;font-weight:normal;color:#000;transform:scaleX(0.8166);transform-origin:left 50%;-webkit-text-stroke:0.2px #000;">AVENIDA ROUXINOL</span>
<span class="t" style="left:1015.70px;top:463.04px;font-size:10px;font-weight:normal;color:#000;transform:scaleX(0.9350);transform-origin:left 50%;-webkit-text-stroke:0.2px #000;">84</span>
<span class="t" style="left:1067.90px;top:463.04px;font-size:10px;font-weight:normal;color:#000;transform:scaleX(0.8811);transform-origin:left 50%;-webkit-text-stroke:0.2px #000;">CJ 52</span>
<span class="t" style="left:1186.80px;top:463.04px;font-size:10px;font-weight:normal;color:#000;transform:scaleX(0.8050);transform-origin:left 50%;-webkit-text-stroke:0.2px #000;">MOEMA</span>
<span class="t" style="left:1295.00px;top:463.04px;font-size:10px;font-weight:normal;color:#000;transform:scaleX(0.9350);transform-origin:left 50%;-webkit-text-stroke:0.2px #000;">04516000</span>
<span class="t" style="left:1356.50px;top:463.04px;font-size:10px;font-weight:normal;color:#000;transform:scaleX(0.8250);transform-origin:left 50%;-webkit-text-stroke:0.2px #000;">SÃO PAULO</span>
<span class="t" style="left:1495.20px;top:463.04px;font-size:10px;font-weight:normal;color:#000;transform:scaleX(0.8050);transform-origin:left 50%;-webkit-text-stroke:0.2px #000;">SP</span>
<span class="t" style="left:1525.60px;top:463.04px;font-size:10px;font-weight:normal;color:#000;transform:scaleX(0.9465);transform-origin:left 50%;-webkit-text-stroke:0.2px #000;">11986962693</span>
<span class="t" style="left:1616.50px;top:463.04px;font-size:10px;font-weight:normal;color:#000;transform:scaleX(0.9602);transform-origin:left 50%;-webkit-text-stroke:0.2px #000;">atendimento@sendinfo.com.br</span>
<span class="t" style="left:1812.60px;top:463.04px;font-size:10px;font-weight:normal;color:#000;transform:scaleX(0.8050);transform-origin:left 50%;-webkit-text-stroke:0.2px #000;">ADVOGADA</span>
<span class="t" style="left:223.70px;top:490.04px;font-size:10px;font-weight:normal;color:#000;transform:scaleX(0.9350);transform-origin:left 50%;-webkit-text-stroke:0.2px #000;">5</span>
<span class="t" style="left:273.70px;top:490.04px;font-size:10px;font-weight:normal;color:#000;transform:scaleX(0.8129);transform-origin:left 50%;-webkit-text-stroke:0.2px #000;">LEILA LIBARDI</span>
<span class="t" style="right:1416.40px;top:490.04px;font-size:10px;font-weight:normal;color:#000;transform:scaleX(0.9431);transform-origin:right 50%;-webkit-text-stroke:0.2px #000;">25.650,00</span>
<span class="t" style="right:1344.10px;top:490.04px;font-size:10px;font-weight:normal;color:#000;transform:scaleX(0.9409);transform-origin:right 50%;-webkit-text-stroke:0.2px #000;">1,0000</span>
<span class="t" style="right:1265.10px;top:490.04px;font-size:10px;font-weight:normal;color:#000;transform:scaleX(0.9431);transform-origin:right 50%;-webkit-text-stroke:0.2px #000;">25.650,00</span>
<span class="t" style="right:1193.20px;top:490.04px;font-size:10px;font-weight:normal;color:#000;-webkit-text-stroke:0.2px #000;">21/02/1975</span>
<span class="t" style="right:1101.50px;top:490.04px;font-size:10px;font-weight:normal;color:#000;transform:scaleX(1.3667);transform-origin:right 50%;-webkit-text-stroke:0.2px #000;">/ /</span>
<span class="t" style="left:828.80px;top:490.04px;font-size:10px;font-weight:normal;color:#000;transform:scaleX(0.8134);transform-origin:left 50%;-webkit-text-stroke:0.2px #000;">RUA COMENDADOR EDUARDO SACCAB</span>
<span class="t" style="left:1015.70px;top:490.04px;font-size:10px;font-weight:normal;color:#000;transform:scaleX(0.9350);transform-origin:left 50%;-webkit-text-stroke:0.2px #000;">215</span>
<span class="t" style="left:1067.90px;top:490.04px;font-size:10px;font-weight:normal;color:#000;transform:scaleX(0.8432);transform-origin:left 50%;-webkit-text-stroke:0.2px #000;">CONJUNTO 416</span>
<span class="t" style="left:1186.80px;top:490.04px;font-size:10px;font-weight:normal;color:#000;transform:scaleX(0.8050);transform-origin:left 50%;-webkit-text-stroke:0.2px #000;">BROOKLIN</span>
<span class="t" style="left:1356.50px;top:490.04px;font-size:10px;font-weight:normal;color:#000;transform:scaleX(0.8250);transform-origin:left 50%;-webkit-text-stroke:0.2px #000;">SÃO PAULO</span>
<span class="t" style="left:1495.20px;top:490.04px;font-size:10px;font-weight:normal;color:#000;transform:scaleX(0.8050);transform-origin:left 50%;-webkit-text-stroke:0.2px #000;">SP</span>
<span class="t" style="left:1616.50px;top:490.04px;font-size:10px;font-weight:normal;color:#000;transform:scaleX(0.9604);transform-origin:left 50%;-webkit-text-stroke:0.2px #000;">naoinformado@gmail.co</span>
<span class="t" style="left:223.70px;top:517.03px;font-size:10px;font-weight:normal;color:#000;transform:scaleX(0.9350);transform-origin:left 50%;-webkit-text-stroke:0.2px #000;">6</span>
<span class="t" style="left:273.70px;top:517.03px;font-size:10px;font-weight:normal;color:#000;transform:scaleX(0.8097);transform-origin:left 50%;-webkit-text-stroke:0.2px #000;">MARIANA MENEGHISSO</span>
<span class="t" style="right:1416.40px;top:517.03px;font-size:10px;font-weight:normal;color:#000;transform:scaleX(0.9431);transform-origin:right 50%;-webkit-text-stroke:0.2px #000;">17.353,00</span>
<span class="t" style="right:1344.10px;top:517.03px;font-size:10px;font-weight:normal;color:#000;transform:scaleX(0.9409);transform-origin:right 50%;-webkit-text-stroke:0.2px #000;">1,0000</span>
<span class="t" style="right:1265.10px;top:517.03px;font-size:10px;font-weight:normal;color:#000;transform:scaleX(0.9431);transform-origin:right 50%;-webkit-text-stroke:0.2px #000;">17.353,00</span>
<span class="t" style="right:1193.20px;top:517.03px;font-size:10px;font-weight:normal;color:#000;-webkit-text-stroke:0.2px #000;">06/05/1978</span>
<span class="t" style="right:1101.50px;top:517.03px;font-size:10px;font-weight:normal;color:#000;transform:scaleX(1.3667);transform-origin:right 50%;-webkit-text-stroke:0.2px #000;">/ /</span>
<span class="t" style="left:1495.20px;top:517.03px;font-size:10px;font-weight:normal;color:#000;transform:scaleX(0.8050);transform-origin:left 50%;-webkit-text-stroke:0.2px #000;">AC</span>
<span class="t" style="left:1616.50px;top:517.03px;font-size:10px;font-weight:normal;color:#000;transform:scaleX(0.9591);transform-origin:left 50%;-webkit-text-stroke:0.2px #000;">mariana@pasquattoarquitetura.com.br</span>
<span class="t" style="left:223.70px;top:544.03px;font-size:10px;font-weight:normal;color:#000;transform:scaleX(0.9350);transform-origin:left 50%;-webkit-text-stroke:0.2px #000;">7</span>
<span class="t" style="left:273.70px;top:544.03px;font-size:10px;font-weight:normal;color:#000;transform:scaleX(0.8200);transform-origin:left 50%;-webkit-text-stroke:0.2px #000;">RENAN ALTERA</span>
<span class="t" style="right:1416.40px;top:544.03px;font-size:10px;font-weight:normal;color:#000;transform:scaleX(0.9431);transform-origin:right 50%;-webkit-text-stroke:0.2px #000;">15.040,00</span>
<span class="t" style="right:1344.10px;top:544.03px;font-size:10px;font-weight:normal;color:#000;transform:scaleX(0.9409);transform-origin:right 50%;-webkit-text-stroke:0.2px #000;">1,0000</span>
<span class="t" style="right:1265.10px;top:544.03px;font-size:10px;font-weight:normal;color:#000;transform:scaleX(0.9431);transform-origin:right 50%;-webkit-text-stroke:0.2px #000;">15.040,00</span>
<span class="t" style="right:1193.20px;top:544.03px;font-size:10px;font-weight:normal;color:#000;-webkit-text-stroke:0.2px #000;">16/12/2000</span>
<span class="t" style="right:1101.50px;top:544.03px;font-size:10px;font-weight:normal;color:#000;transform:scaleX(1.0228);transform-origin:right 50%;-webkit-text-stroke:0.2px #000;">24/03/25</span>
<span class="t" style="left:828.80px;top:544.03px;font-size:10px;font-weight:normal;color:#000;transform:scaleX(0.8336);transform-origin:left 50%;-webkit-text-stroke:0.2px #000;">AV. BRIGADEIRO FARIA LIMA</span>
<span class="t" style="left:1015.70px;top:544.03px;font-size:10px;font-weight:normal;color:#000;transform:scaleX(0.9350);transform-origin:left 50%;-webkit-text-stroke:0.2px #000;">1800</span>
<span class="t" style="left:1067.90px;top:544.03px;font-size:10px;font-weight:normal;color:#000;transform:scaleX(0.8603);transform-origin:left 50%;-webkit-text-stroke:0.2px #000;">CONJUNTOS 216 E 217</span>
<span class="t" style="left:1186.80px;top:544.03px;font-size:10px;font-weight:normal;color:#000;transform:scaleX(0.8220);transform-origin:left 50%;-webkit-text-stroke:0.2px #000;">JARDIM PAULISTANO</span>
<span class="t" style="left:1356.50px;top:544.03px;font-size:10px;font-weight:normal;color:#000;transform:scaleX(0.8250);transform-origin:left 50%;-webkit-text-stroke:0.2px #000;">SÃO PAULO</span>
<span class="t" style="left:1495.20px;top:544.03px;font-size:10px;font-weight:normal;color:#000;transform:scaleX(0.8050);transform-origin:left 50%;-webkit-text-stroke:0.2px #000;">SP</span>
<span class="t" style="left:1525.60px;top:544.03px;font-size:10px;font-weight:normal;color:#000;transform:scaleX(0.9401);transform-origin:left 50%;-webkit-text-stroke:0.2px #000;">839-7793</span>
<span class="t" style="left:1616.50px;top:544.03px;font-size:10px;font-weight:normal;color:#000;transform:scaleX(0.9602);transform-origin:left 50%;-webkit-text-stroke:0.2px #000;">atendimento@sendinfo.com.br</span>
<span class="t" style="left:223.70px;top:571.03px;font-size:10px;font-weight:normal;color:#000;transform:scaleX(0.9350);transform-origin:left 50%;-webkit-text-stroke:0.2px #000;">8</span>
<span class="t" style="left:273.70px;top:571.03px;font-size:10px;font-weight:normal;color:#000;transform:scaleX(0.8227);transform-origin:left 50%;-webkit-text-stroke:0.2px #000;">GIOVANI SAITO DOS SANTOS</span>
<span class="t" style="right:1416.40px;top:571.03px;font-size:10px;font-weight:normal;color:#000;transform:scaleX(0.9443);transform-origin:right 50%;-webkit-text-stroke:0.2px #000;">7.000,00</span>
<span class="t" style="right:1344.10px;top:571.03px;font-size:10px;font-weight:normal;color:#000;transform:scaleX(0.9409);transform-origin:right 50%;-webkit-text-stroke:0.2px #000;">1,0000</span>
<span class="t" style="right:1265.10px;top:571.03px;font-size:10px;font-weight:normal;color:#000;transform:scaleX(0.9443);transform-origin:right 50%;-webkit-text-stroke:0.2px #000;">7.000,00</span>
<span class="t" style="right:1193.20px;top:571.03px;font-size:10px;font-weight:normal;color:#000;-webkit-text-stroke:0.2px #000;">02/06/1991</span>
<span class="t" style="right:1101.50px;top:571.03px;font-size:10px;font-weight:normal;color:#000;transform:scaleX(1.3667);transform-origin:right 50%;-webkit-text-stroke:0.2px #000;">/ /</span>
<span class="t" style="left:828.80px;top:571.03px;font-size:10px;font-weight:normal;color:#000;transform:scaleX(0.9581);transform-origin:left 50%;-webkit-text-stroke:0.2px #000;">rua urbano santos</span>
<span class="t" style="left:1015.70px;top:571.03px;font-size:10px;font-weight:normal;color:#000;transform:scaleX(0.9350);transform-origin:left 50%;-webkit-text-stroke:0.2px #000;">310</span>
<span class="t" style="left:1186.80px;top:571.03px;font-size:10px;font-weight:normal;color:#000;transform:scaleX(0.9576);transform-origin:left 50%;-webkit-text-stroke:0.2px #000;">jd cumbica</span>
<span class="t" style="left:1295.00px;top:571.03px;font-size:10px;font-weight:normal;color:#000;transform:scaleX(0.9350);transform-origin:left 50%;-webkit-text-stroke:0.2px #000;">07182320</span>
<span class="t" style="left:1356.50px;top:571.03px;font-size:10px;font-weight:normal;color:#000;transform:scaleX(0.8050);transform-origin:left 50%;-webkit-text-stroke:0.2px #000;">GUARULHOS</span>
<span class="t" style="left:1495.20px;top:571.03px;font-size:10px;font-weight:normal;color:#000;transform:scaleX(0.8050);transform-origin:left 50%;-webkit-text-stroke:0.2px #000;">SP</span>
<span class="t" style="left:1525.60px;top:571.03px;font-size:10px;font-weight:normal;color:#000;transform:scaleX(0.9703);transform-origin:left 50%;-webkit-text-stroke:0.2px #000;">11991114534</span>
<span class="t" style="left:1616.50px;top:571.03px;font-size:10px;font-weight:normal;color:#000;transform:scaleX(0.9600);transform-origin:left 50%;-webkit-text-stroke:0.2px #000;">giovanisaito@hotmail.com</span>
<span class="t" style="left:223.70px;top:598.03px;font-size:10px;font-weight:normal;color:#000;transform:scaleX(0.9350);transform-origin:left 50%;-webkit-text-stroke:0.2px #000;">9</span>
<span class="t" style="left:273.70px;top:598.03px;font-size:10px;font-weight:normal;color:#000;transform:scaleX(0.8136);transform-origin:left 50%;-webkit-text-stroke:0.2px #000;">ERIKA ROSSI SEBASTIANI</span>
<span class="t" style="right:1416.40px;top:598.03px;font-size:10px;font-weight:normal;color:#000;transform:scaleX(0.9443);transform-origin:right 50%;-webkit-text-stroke:0.2px #000;">3.500,00</span>
<span class="t" style="right:1344.10px;top:598.03px;font-size:10px;font-weight:normal;color:#000;transform:scaleX(0.9409);transform-origin:right 50%;-webkit-text-stroke:0.2px #000;">1,0000</span>
<span class="t" style="right:1265.10px;top:598.03px;font-size:10px;font-weight:normal;color:#000;transform:scaleX(0.9443);transform-origin:right 50%;-webkit-text-stroke:0.2px #000;">3.500,00</span>
<span class="t" style="right:1193.20px;top:598.03px;font-size:10px;font-weight:normal;color:#000;-webkit-text-stroke:0.2px #000;">04/12/1969</span>
<span class="t" style="right:1101.50px;top:598.03px;font-size:10px;font-weight:normal;color:#000;transform:scaleX(1.3667);transform-origin:right 50%;-webkit-text-stroke:0.2px #000;">/ /</span>
<span class="t" style="left:828.80px;top:598.03px;font-size:10px;font-weight:normal;color:#000;transform:scaleX(0.8170);transform-origin:left 50%;-webkit-text-stroke:0.2px #000;">R. FERDINANDO DEMARCHI</span>
<span class="t" style="left:1015.70px;top:598.03px;font-size:10px;font-weight:normal;color:#000;transform:scaleX(1.0263);transform-origin:left 50%;-webkit-text-stroke:0.2px #000;">111</span>
<span class="t" style="left:1067.90px;top:598.03px;font-size:10px;font-weight:normal;color:#000;transform:scaleX(0.9555);transform-origin:left 50%;-webkit-text-stroke:0.2px #000;">casa 5</span>
<span class="t" style="left:1186.80px;top:598.03px;font-size:10px;font-weight:normal;color:#000;transform:scaleX(0.8321);transform-origin:left 50%;-webkit-text-stroke:0.2px #000;">JD. VALDIBIA</span>
<span class="t" style="left:1295.00px;top:598.03px;font-size:10px;font-weight:normal;color:#000;transform:scaleX(0.9350);transform-origin:left 50%;-webkit-text-stroke:0.2px #000;">09820130</span>
<span class="t" style="left:1356.50px;top:598.03px;font-size:10px;font-weight:normal;color:#000;transform:scaleX(0.8168);transform-origin:left 50%;-webkit-text-stroke:0.2px #000;">SAO BERNARDO DO CAMPO</span>
<span class="t" style="left:1495.20px;top:598.03px;font-size:10px;font-weight:normal;color:#000;transform:scaleX(0.8050);transform-origin:left 50%;-webkit-text-stroke:0.2px #000;">SP</span>
<span class="t" style="left:1525.60px;top:598.03px;font-size:10px;font-weight:normal;color:#000;transform:scaleX(0.9476);transform-origin:left 50%;-webkit-text-stroke:0.2px #000;">1199996666</span>
<span class="t" style="left:1616.50px;top:598.03px;font-size:10px;font-weight:normal;color:#000;transform:scaleX(0.8309);transform-origin:left 50%;-webkit-text-stroke:0.2px #000;">TESTE@FATURAMENTO.COM</span>
<span class="t" style="left:223.70px;top:625.03px;font-size:10px;font-weight:normal;color:#000;transform:scaleX(0.9350);transform-origin:left 50%;-webkit-text-stroke:0.2px #000;">10</span>
<span class="t" style="right:1416.40px;top:625.03px;font-size:10px;font-weight:normal;color:#000;transform:scaleX(0.9443);transform-origin:right 50%;-webkit-text-stroke:0.2px #000;">0,00</span>
<span class="t" style="right:1344.10px;top:625.03px;font-size:10px;font-weight:normal;color:#000;transform:scaleX(0.9409);transform-origin:right 50%;-webkit-text-stroke:0.2px #000;">0,0000</span>
<span class="t" style="right:1265.10px;top:625.03px;font-size:10px;font-weight:normal;color:#000;transform:scaleX(0.9443);transform-origin:right 50%;-webkit-text-stroke:0.2px #000;">0,00</span>
<span class="t" style="right:1193.20px;top:625.03px;font-size:10px;font-weight:normal;color:#000;transform:scaleX(1.3667);transform-origin:right 50%;-webkit-text-stroke:0.2px #000;">/ /</span>
<span class="t" style="right:1101.50px;top:625.03px;font-size:10px;font-weight:normal;color:#000;transform:scaleX(1.3667);transform-origin:right 50%;-webkit-text-stroke:0.2px #000;">/ /</span>
<svg class="a" style="left:1521px;top:311.9px" width="46" height="46" viewBox="0 0 46 46"><defs><filter id="bs2" x="-40%" y="-40%" width="180%" height="180%"><feGaussianBlur in="SourceAlpha" stdDeviation="1.5"/><feOffset dx="1.6" dy="1.8"/><feComponentTransfer><feFuncA type="linear" slope="0.6"/></feComponentTransfer><feMerge><feMergeNode/><feMergeNode in="SourceGraphic"/></feMerge></filter></defs><g filter="url(#bs2)"><circle cx="22" cy="22" r="16.1" fill="#fff"/></g><circle cx="22" cy="22" r="12.6" fill="#0b4287"/><text x="22" y="29" text-anchor="middle" font-family="Liberation Sans" font-weight="bold" font-size="19" fill="#fff" stroke="#fff" stroke-width="0.9">2</text></svg><svg class="a" style="left:1618.9px;top:308.9px" width="46" height="46" viewBox="0 0 46 46"><defs><filter id="bs3" x="-40%" y="-40%" width="180%" height="180%"><feGaussianBlur in="SourceAlpha" stdDeviation="1.5"/><feOffset dx="1.6" dy="1.8"/><feComponentTransfer><feFuncA type="linear" slope="0.6"/></feComponentTransfer><feMerge><feMergeNode/><feMergeNode in="SourceGraphic"/></feMerge></filter></defs><g filter="url(#bs3)"><circle cx="22" cy="22" r="16.1" fill="#fff"/></g><circle cx="22" cy="22" r="12.6" fill="#0b4287"/><text x="22" y="29" text-anchor="middle" font-family="Liberation Sans" font-weight="bold" font-size="19" fill="#fff" stroke="#fff" stroke-width="0.9">3</text></svg>
</body></html>
